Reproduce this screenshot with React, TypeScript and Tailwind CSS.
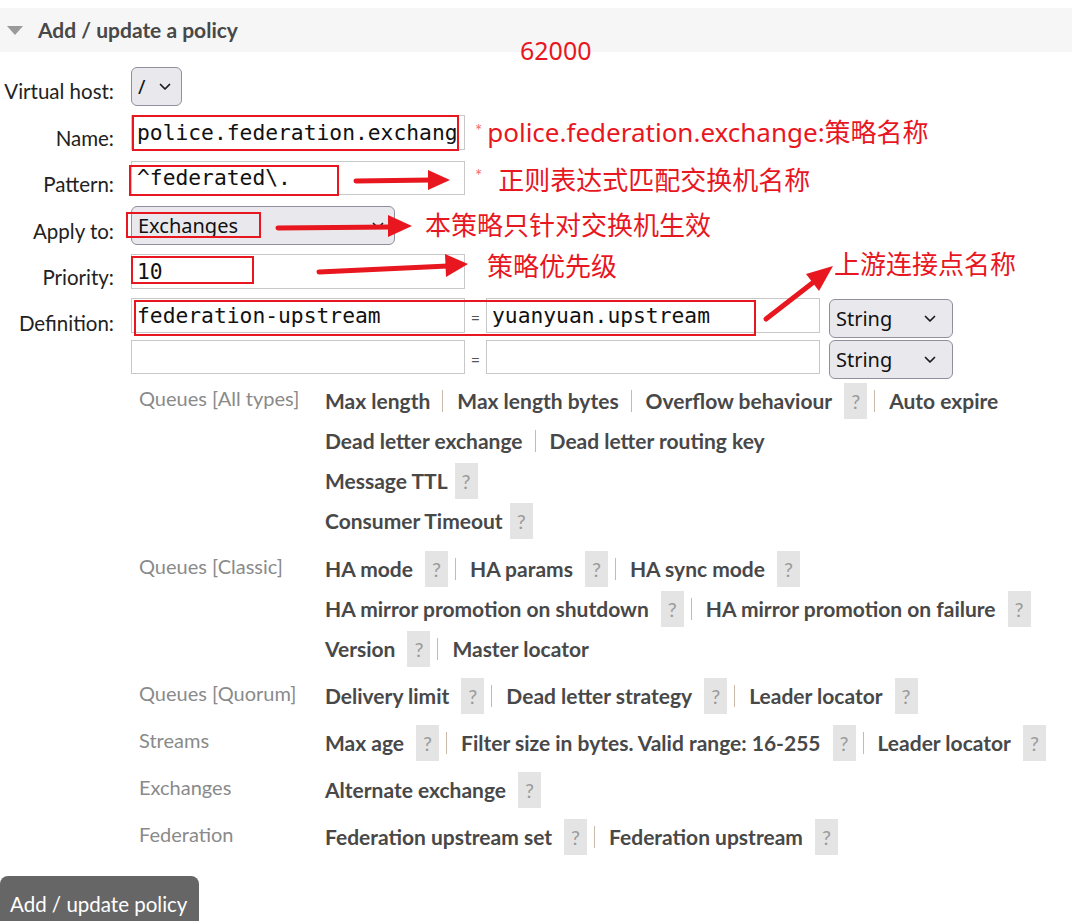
import React from "react";

const RED = "#e8171f";

type Arg = { t: string; help?: boolean; tight?: boolean };

const groups: { title: string; lines: Arg[][] }[] = [
  {
    title: "Queues [All types]",
    lines: [
      [{ t: "Max length" }, { t: "Max length bytes" }, { t: "Overflow behaviour", help: true }, { t: "Auto expire" }],
      [{ t: "Dead letter exchange" }, { t: "Dead letter routing key" }],
      [{ t: "Message TTL", help: true, tight: true }],
      [{ t: "Consumer Timeout", help: true, tight: true }],
    ],
  },
  {
    title: "Queues [Classic]",
    lines: [
      [{ t: "HA mode", help: true }, { t: "HA params", help: true }, { t: "HA sync mode", help: true }],
      [{ t: "HA mirror promotion on shutdown", help: true }, { t: "HA mirror promotion on failure", help: true }],
      [{ t: "Version", help: true }, { t: "Master locator" }],
    ],
  },
  {
    title: "Queues [Quorum]",
    lines: [[{ t: "Delivery limit", help: true }, { t: "Dead letter strategy", help: true }, { t: "Leader locator", help: true }]],
  },
  {
    title: "Streams",
    lines: [[{ t: "Max age", help: true }, { t: "Filter size in bytes. Valid range: 16-255", help: true }, { t: "Leader locator", help: true }]],
  },
  { title: "Exchanges", lines: [[{ t: "Alternate exchange", help: true }]] },
  {
    title: "Federation",
    lines: [[{ t: "Federation upstream set", help: true }, { t: "Federation upstream", help: true }]],
  },
];

function Chevron() {
  return (
    <svg width="12" height="8" viewBox="0 0 12 8">
      <path d="M1.5 1.5 L6 6 L10.5 1.5" fill="none" stroke="#1a1a1a" strokeWidth="1.7" strokeLinecap="round" strokeLinejoin="round" />
    </svg>
  );
}

function Select({ value, w, pr }: { value: string; w: string; pr: string }) {
  return (
    <div
      className={`${w} ${pr} h-[39px] shrink-0 flex items-center justify-between pl-[6px] rounded-[6px] border border-[#8f8f9d] bg-[#e9e9ed] text-[20px] text-[#111] font-['Noto_Sans',sans-serif]`}
    >
      <span>{value}</span>
      <Chevron />
    </div>
  );
}

function TextInput({ value, h = "h-[35px]" }: { value?: string; h?: string }) {
  return (
    <div className={`w-[334px] ${h} shrink-0 border border-[#c8c8c8] bg-white pl-[5px] pr-[7px] flex items-center`}>
      <div className="flex-1 overflow-hidden whitespace-nowrap text-[21.3px] text-[#111] font-['DejaVu_Sans_Mono',monospace]">
        {value}
      </div>
    </div>
  );
}

function Label({ text, pt }: { text: string; pt: string }) {
  return <div className={`w-[114px] shrink-0 text-right text-[20.5px] leading-[24px] text-[#222] ${pt}`}>{text}</div>;
}

function Note({ children, className = "" }: { children: React.ReactNode; className?: string }) {
  return (
    <span
      className={`text-[26px] leading-[26px] whitespace-nowrap font-['Noto_Sans','Noto_Sans_CJK_SC',sans-serif] ${className}`}
      style={{ color: RED }}
    >
      {children}
    </span>
  );
}

function HelpLine({ items }: { items: Arg[] }) {
  return (
    <div className="flex items-center h-[40px] whitespace-nowrap">
      {items.map((a, i) => (
        <React.Fragment key={i}>
          {i > 0 && (
            <span className={`${items[i - 1].help ? "ml-[7px]" : "ml-[12px]"} mr-[14px] w-px h-[22px] bg-[#c9b9aa]`} />
          )}
          <span className="text-[21px] font-bold text-[#484848]">{a.t}</span>
          {a.help && (
            <span
              className={`${a.tight ? "ml-[7px]" : "ml-[12px]"} w-[23px] h-[36px] flex items-center justify-center bg-[#e4e4e4] text-[20px] text-[#9a9a9a]`}
            >
              ?
            </span>
          )}
        </React.Fragment>
      ))}
    </div>
  );
}

export default function App() {
  return (
    <div className="relative w-full h-[921px] overflow-hidden bg-white font-['Lato',sans-serif]">
      {/* section header */}
      <div className="mt-[8px] h-[44px] bg-[#f6f6f6] flex items-center">
        <svg width="16" height="9" viewBox="0 0 16 9" className="ml-[7px]">
          <path d="M0 0 L16 0 L8 9 Z" fill="#9a9a9a" />
        </svg>
        <span className="ml-[15px] text-[21px] font-bold text-[#484848]">Add / update a policy</span>
      </div>

      {/* form */}
      <div className="flex flex-col">
        <div className="mt-[15px] flex items-start">
          <Label text="Virtual host:" pt="pt-[12px]" />
          <div className="ml-[17px]">
            <Select value="/" w="w-[51px]" pr="pr-[10px]" />
          </div>
        </div>

        <div className="mt-[9px] flex items-start">
          <Label text="Name:" pt="pt-[11px]" />
          <div className="ml-[17px] flex items-start">
            <TextInput value="police.federation.exchange" />
            <span className="ml-[10px] mt-[3px] text-[17px] text-[#f06a6a]">*</span>
            <Note className="ml-[5px] mt-[4px] text-[25px]">police.federation.exchange:策略名称</Note>
          </div>
        </div>

        <div className="mt-[11px] flex items-start">
          <Label text="Pattern:" pt="pt-[11px]" />
          <div className="ml-[17px] flex items-start">
            <TextInput value="^federated\." h="h-[34px]" />
            <span className="ml-[10px] mt-[2px] text-[17px] text-[#f06a6a]">*</span>
            <Note className="ml-[16px] mt-[6px]">正则表达式匹配交换机名称</Note>
          </div>
        </div>

        <div className="mt-[10px] flex items-start">
          <Label text="Apply to:" pt="pt-[13px]" />
          <div className="ml-[17px] flex items-start">
            <Select value="Exchanges" w="w-[264px]" pr="pr-[10px]" />
            <Note className="ml-[30px] mt-[6px]">本策略只针对交换机生效</Note>
          </div>
        </div>

        <div className="mt-[9px] flex items-start">
          <Label text="Priority:" pt="pt-[11px]" />
          <div className="ml-[17px] flex items-start">
            <TextInput value="10" />
            <Note className="ml-[22px] -mt-[1px]">策略优先级</Note>
            <Note className="ml-[217px] -mt-[3px] text-[25.5px]">上游连接点名称</Note>
          </div>
        </div>

        <div className="mt-[9px] flex items-start">
          <Label text="Definition:" pt="pt-[13px]" />
          <div className="ml-[17px] flex flex-col gap-[2px]">
            {["federation-upstream", ""].map((k, i) => (
              <div key={i} className="flex items-start h-[40px]">
                <TextInput value={k} h={i === 0 ? "h-[35px]" : "h-[34px]"} />
                <span className="w-[21px] text-center mt-[8px] text-[16px] text-[#555]">=</span>
                <TextInput value={i === 0 ? "yuanyuan.upstream" : ""} h={i === 0 ? "h-[35px]" : "h-[34px]"} />
                <div className={`ml-[9px] ${i === 0 ? "mt-[1px]" : ""}`}>
                  <Select value="String" w="w-[124px]" pr="pr-[16px]" />
                </div>
              </div>
            ))}
          </div>
        </div>

        {/* argument help */}
        <div className="mt-[1px] ml-[131px] flex flex-col gap-[7px]">
          {groups.map((g, gi) => (
            <div key={g.title} className={`flex items-start ${gi === 1 ? "mt-[1px]" : ""}`}>
              <div className="w-[194px] shrink-0 pl-[8px] text-[20px] leading-[34px] text-[#8a8a8a]">{g.title}</div>
              <div className="flex flex-col">
                {g.lines.map((l, i) => (
                  <HelpLine key={i} items={l} />
                ))}
              </div>
            </div>
          ))}
        </div>

        <div className="mt-[19px]">
          <button className="h-[57px] pl-[10px] pr-[12px] rounded-[8px] bg-[#666] text-white text-[20.5px]">
            Add / update policy
          </button>
        </div>
      </div>

      {/* annotations drawn over the screenshot */}
      <span
        className="absolute left-[520px] top-[35px] text-[25px] leading-[30px] font-['Noto_Sans',sans-serif]"
        style={{ color: RED }}
      >
        62000
      </span>
      <svg className="absolute left-0 top-0 pointer-events-none" width="1072" height="921" viewBox="0 0 1072 921">
        <g fill="none" stroke={RED} strokeWidth="2">
          <rect x="133" y="116" width="325" height="34" />
          <rect x="130" y="166" width="208" height="29" />
          <rect x="127" y="213" width="133" height="24" />
          <rect x="132" y="257" width="121" height="26" />
          <rect x="135" y="301" width="620" height="34" />
        </g>
        <g stroke={RED} strokeWidth="5" strokeLinecap="round">
          <line x1="356" y1="181" x2="432" y2="180" />
          <line x1="278" y1="228" x2="392" y2="227" />
          <line x1="319" y1="272" x2="448" y2="266" />
          <line x1="766" y1="319" x2="815" y2="281" />
        </g>
        <g fill={RED}>
          <polygon points="428,170 450,180 428,190" />
          <polygon points="388,215 412,226 388,237" />
          <polygon points="445,254 468,264 446,277" />
          <polygon points="806,274 833,266 819,291" />
        </g>
      </svg>
    </div>
  );
}
